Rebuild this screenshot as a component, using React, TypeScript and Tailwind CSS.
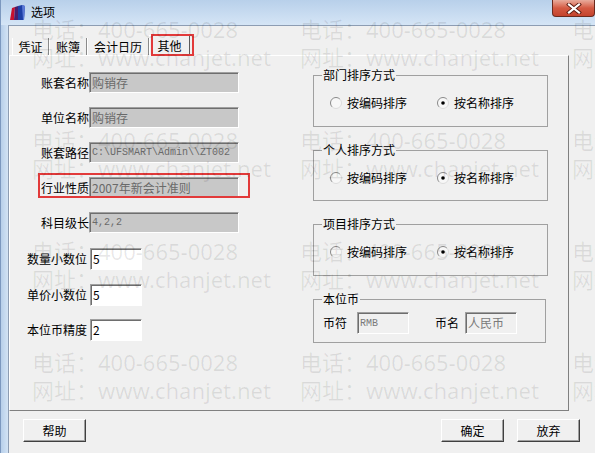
import React from "react";

const ui = "font-['Noto_Sans_CJK_SC',sans-serif]";

function Radio({ checked }: { checked: boolean }) {
  return (
    <svg width="12" height="12" viewBox="0 0 12 12" className="shrink-0">
      <circle cx="6" cy="6" r="5.5" fill="#f7f7f7" />
      <path d="M2.1 9.9 A5.5 5.5 0 0 1 9.9 2.1" fill="none" stroke="#8a8a8a" strokeWidth="1" />
      <path d="M9.9 2.1 A5.5 5.5 0 0 1 2.1 9.9" fill="none" stroke="#dcdcdc" strokeWidth="1" />
      {checked && <circle cx="6" cy="6" r="1.8" fill="#000" />}
    </svg>
  );
}

function SortGroup({ title, h, mt }: { title: string; h: string; mt: string }) {
  return (
    <div className={`${mt} ${h} w-[235px] border border-[#a0a0a0] flex flex-col`}>
      <span className="-mt-[9px] ml-[8px] px-[1px] w-fit bg-[#f0f0f0] leading-[16px] text-[12px]">{title}</span>
      <div className="mt-[12px] ml-[16px] flex items-center h-[16px] text-[12px]">
        <div className="flex items-center gap-[5px] w-[107px]">
          <Radio checked={false} />
          <span>按编码排序</span>
        </div>
        <div className="flex items-center gap-[5px]">
          <Radio checked />
          <span>按名称排序</span>
        </div>
      </div>
    </div>
  );
}

const sunken =
  "border border-t-[#a0a0a0] border-l-[#a0a0a0] border-b-white border-r-white shadow-[inset_1px_1px_0_#6e6e6e]";

function GrayRow({ label, value, mono, mt, mark }: { label: string; value: string; mono?: boolean; mt: string; mark?: boolean }) {
  return (
    <div className={`${mt} relative flex items-center h-[21px] text-[12px]`}>
      <span className="w-[79px] text-right leading-[16px]">{label}</span>
      <div
        className={`w-[150px] h-[21px] bg-[#c8c8c8] ${sunken} flex items-center pl-[2px] text-[#6a6a6a] ${
          mono ? "font-['Liberation_Mono',monospace] text-[10px]" : "text-[12px]"
        }`}
      >
        {value}
      </div>
      {mark && (
        <div className="absolute left-[28px] -top-[4px] w-[212px] h-[25px] border-2 border-[#e23a3a] pointer-events-none" />
      )}
    </div>
  );
}

function WhiteRow({ label, value, mt }: { label: string; value: string; mt: string }) {
  return (
    <div className={`${mt} flex items-center h-[22px] text-[12px]`}>
      <span className="w-[77px] text-right leading-[16px]">{label}</span>
      <div className={`ml-[3px] w-[52px] h-[22px] bg-white ${sunken} flex items-center pl-[2px]`}>{value}</div>
    </div>
  );
}

function Button({ label, cls }: { label: string; cls?: string }) {
  return (
    <div
      className={`${cls ?? ""} w-[63px] h-[23px] flex items-center justify-center text-[12px] bg-[#f0f0f0] border border-t-white border-l-white border-r-[#404040] border-b-[#404040] shadow-[inset_-1px_-1px_0_#a0a0a0]`}
    >
      {label}
    </div>
  );
}

function Tab({ label, w }: { label: string; w: string }) {
  return (
    <div
      className={`${w} h-[17px] flex items-center justify-center border-l border-l-white border-r border-r-[#8a8a8a] text-[12px] leading-[16px]`}
    >
      {label}
    </div>
  );
}

function Watermark() {
  const cell = (
    <div className="flex flex-col leading-[28px] whitespace-nowrap">
      <span>电话：400-665-0028</span>
      <span>网址：www.chanjet.net</span>
    </div>
  );
  const row = (
    <div className="grid grid-cols-[268px_272px_200px]">
      {cell}
      {cell}
      {cell}
    </div>
  );
  return (
    <div className="absolute left-[32px] top-[15px] pointer-events-none flex flex-col gap-[55px] text-[22px] text-black/[0.09] font-['Noto_Sans','Noto_Sans_CJK_SC',sans-serif]">
      {row}
      {row}
      {row}
      {row}
    </div>
  );
}

export default function App() {
  return (
    <div className={`relative w-[595px] h-[453px] overflow-hidden bg-[#c9dcf0] text-black ${ui}`}>
      {/* title bar */}
      <div className="h-[25px] flex items-start bg-gradient-to-b from-[#b8d0ea] to-[#d5e5f6] border-l border-l-[#7c98bf]">
        <div className="h-[24px] flex items-center pl-[8px] gap-[5px]">
          <svg width="17" height="15" viewBox="0 0 17 15">
            <path d="M1 15 L3 3 L6 2 L5 15 Z" fill="#c8102e" />
            <path d="M5 15 L6 2 L9 1 L9 15 Z" fill="#4a1d6b" />
            <path d="M9 15 L9 1 L13 0 L16 1 L15 15 Z" fill="#1d3fa6" />
            <path d="M13 0 L16 1 L15 15 L14 15 Z" fill="#5b79d6" />
          </svg>
          <span className="text-[12px] leading-[16px]">选项</span>
        </div>
        <div className="ml-auto w-[43px] h-[17px] rounded-b-[4px] border border-t-0 border-[#6b2a1e] bg-gradient-to-b from-[#e8ab9c] via-[#d45a43] to-[#c4432d] flex items-center justify-center">
          <svg width="16" height="11" viewBox="0 0 16 11">
            <path d="M3 1.5 L13 9.5 M13 1.5 L3 9.5" stroke="#5a1a10" strokeWidth="4" strokeLinecap="square" />
            <path d="M3 1.5 L13 9.5 M13 1.5 L3 9.5" stroke="#ffffff" strokeWidth="2.2" strokeLinecap="square" />
          </svg>
        </div>
      </div>

      <div className="flex h-[428px]">
        <div className="w-[8px] bg-gradient-to-r from-[#b7cfea] to-[#d3e3f4] border-l border-l-[#7c98bf]" />
        <div className="flex-1 bg-[#f0f0f0] border-l border-t border-[#8d9db3] flex flex-col">
          {/* tabs */}
          <div className="mt-[8px] ml-[3px] h-[21px] flex items-end">
            <Tab label="凭证" w="w-[37px]" />
            <Tab label="账簿" w="w-[38px]" />
            <Tab label="会计日历" w="w-[62px]" />
            <div className="relative">
              <div className="w-[41px] h-[20px] flex items-center justify-center border-l border-t border-l-white border-t-white border-r border-r-[#5a5a5a] text-[12px] leading-[16px]">
                其他
              </div>
              <div className="absolute left-[2px] -top-[1px] w-[43px] h-[22px] border-2 border-[#e23a3a]" />
            </div>
          </div>

          {/* panel */}
          <div className="w-[560px] h-[356px] border border-t-white border-l-white border-r-[#808080] border-b-[#808080] flex items-start">
            <div className="flex flex-col">
              <GrayRow mt="mt-[16px]" label="账套名称" value="购销存" />
              <GrayRow mt="mt-[14px]" label="单位名称" value="购销存" />
              <GrayRow mt="mt-[14px]" label="账套路径" value="C:\UFSMART\Admin\\ZT002" mono />
              <GrayRow mt="mt-[14px]" label="行业性质" value="2007年新会计准则" mark />
              <GrayRow mt="mt-[14px]" label="科目级长" value="4,2,2" mono />
              <WhiteRow mt="mt-[15px]" label="数量小数位" value="5" />
              <WhiteRow mt="mt-[14px]" label="单价小数位" value="5" />
              <WhiteRow mt="mt-[13px]" label="本位币精度" value="2" />
            </div>
            <div className="ml-[74px] flex flex-col">
              <SortGroup mt="mt-[19px]" h="h-[52px]" title="部门排序方式" />
              <SortGroup mt="mt-[23px]" h="h-[51px]" title="个人排序方式" />
              <SortGroup mt="mt-[23px]" h="h-[52px]" title="项目排序方式" />
              <div className="mt-[23px] h-[44px] w-[233px] border border-[#a0a0a0] flex flex-col text-[12px]">
                <span className="-mt-[9px] ml-[8px] px-[1px] w-fit bg-[#f0f0f0] leading-[16px]">本位币</span>
                <div className="mt-[5px] h-[22px] flex items-center">
                  <span className="ml-[9px] w-[24px] leading-[16px]">币符</span>
                  <div className={`ml-[10px] w-[52px] h-[22px] ${sunken} flex items-center pl-[2px] text-[#7a7a7a] font-['Liberation_Mono',monospace] text-[10px]`}>
                    RMB
                  </div>
                  <span className="ml-[26px] w-[24px] leading-[16px]">币名</span>
                  <div className={`ml-[6px] w-[52px] h-[22px] ${sunken} flex items-center pl-[2px] text-[#7a7a7a]`}>人民币</div>
                </div>
              </div>
            </div>
          </div>

          {/* buttons */}
          <div className="mt-[8px] flex items-start">
            <Button label="帮助" cls="ml-[14px]" />
            <div className="flex-1" />
            <Button label="确定" />
            <Button label="放弃" cls="ml-[13px] mr-[15px]" />
          </div>
        </div>
      </div>

      <Watermark />
    </div>
  );
}
